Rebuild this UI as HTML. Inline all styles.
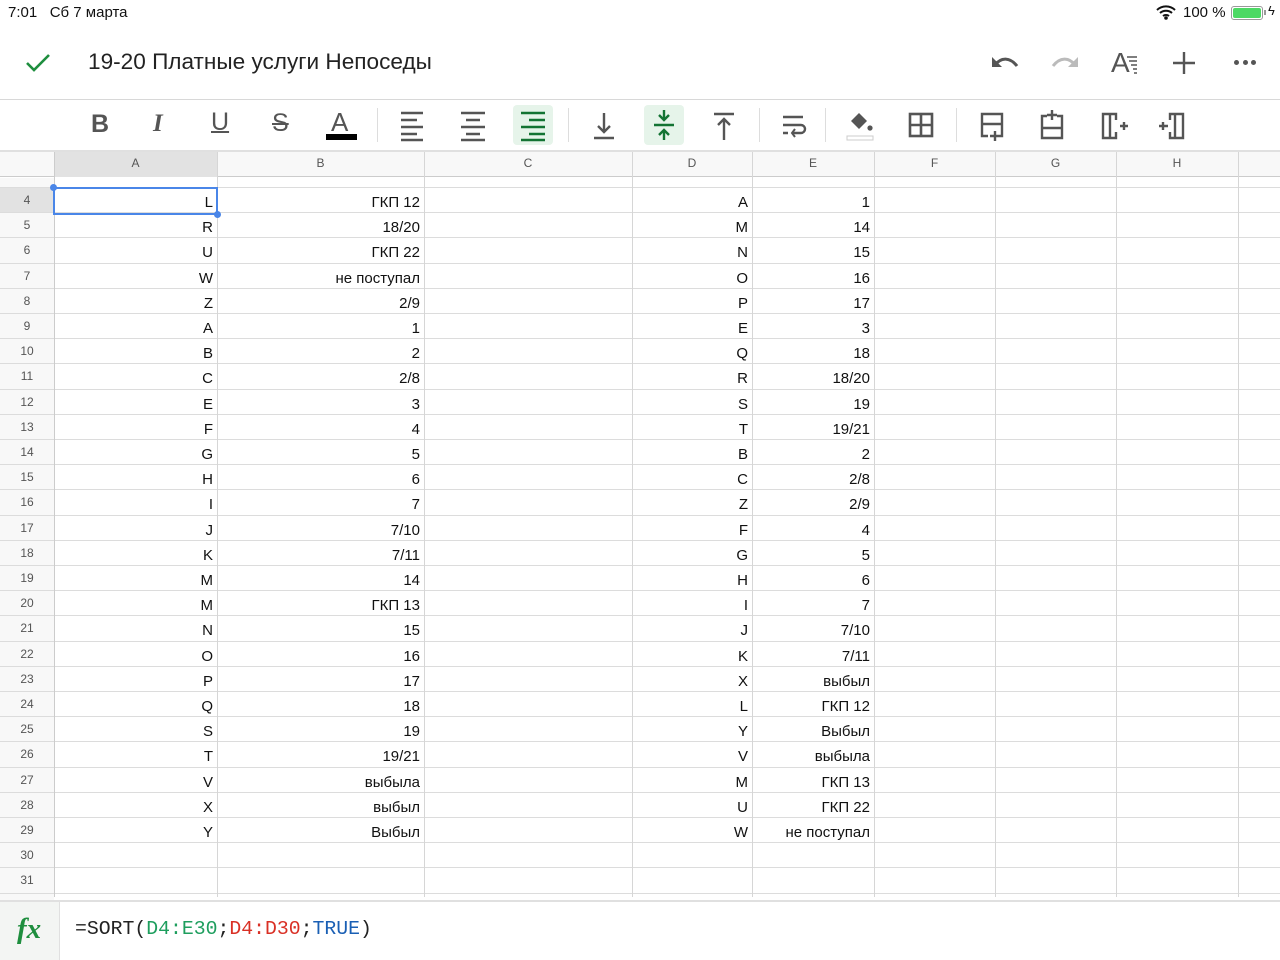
<!DOCTYPE html>
<html><head><meta charset="utf-8"><style>
*{margin:0;padding:0;box-sizing:border-box}
body{width:1280px;height:960px;overflow:hidden;background:#fff;font-family:"Liberation Sans","Noto Sans CJK SC",sans-serif;position:relative;color:#222}
.abs{position:absolute}
.vl{position:absolute;top:152px;width:1px;height:745px;background:#d6d6d6}
.row{position:absolute;left:0;width:1280px;height:25.2px;border-bottom:1px solid #dcdcdc}
.rn{position:absolute;left:0;width:54px;height:100%;background:#f8f8f8;text-align:center;font-size:12px;color:#555;line-height:25px}
.c{position:absolute;top:0;height:100%;text-align:right;font-size:15px;line-height:29px;padding-right:4px;color:#111}
.ch{position:absolute;top:152px;height:25px;text-align:center;font-size:12px;color:#555;line-height:22px}
.ico{position:absolute;top:107px}
.sep{position:absolute;top:108px;width:1px;height:34px;background:#ddd}
</style></head><body>
<div class="abs" style="left:8px;top:4px;font-size:15px;color:#111">7:01&nbsp;&nbsp; Сб 7 марта</div>
<div class="abs" style="left:1183px;top:4px;font-size:15px;color:#111">100 %</div>
<svg class="abs" style="left:1156px;top:5px" width="20" height="15" viewBox="0 0 20 15"><path d="M1 5a13 13 0 0 1 18 0M4 8a9 9 0 0 1 12 0M7 11a5 5 0 0 1 6 0" stroke="#111" stroke-width="2" fill="none"/><circle cx="10" cy="13" r="1.8" fill="#111"/></svg>
<div class="abs" style="left:1231px;top:6px;width:32px;height:14px;border:1px solid #999;border-radius:3px;padding:1px"><div style="background:#4cd964;width:100%;height:100%;border-radius:2px"></div></div>
<div class="abs" style="left:1264px;top:10px;width:2px;height:5px;background:#999"></div>
<div class="abs" style="left:1268px;top:3px;font-size:13px;color:#111">ϟ</div>

<svg class="abs" style="left:25px;top:52px" width="26" height="22" viewBox="0 0 26 22"><path d="M2 11l7 7L24 3" stroke="#1e8e3e" stroke-width="2.6" fill="none"/></svg>
<div class="abs" style="left:88px;top:49px;font-size:22.6px;color:#222">19-20 Платные услуги Непоседы</div>
<svg class="abs" style="left:990px;top:53px" width="30" height="20" viewBox="0 0 30 20"><path d="M5 12c6-8 15-8 22 1" stroke="#555" stroke-width="3" fill="none"/><path d="M2 4v10h10z" fill="#555"/></svg>
<svg class="abs" style="left:1050px;top:53px" width="30" height="20" viewBox="0 0 30 20"><path d="M25 12c-6-8-15-8-22 1" stroke="#bbb" stroke-width="3" fill="none"/><path d="M28 4v10h-10z" fill="#bbb"/></svg>
<div class="abs" style="left:1111px;top:47px;font-size:28px;color:#555">A</div>
<svg class="abs" style="left:1127px;top:56px" width="12" height="18"><path d="M0 1h10M2 5h8M4 9h6M6 13h4M7 17h3" stroke="#555" stroke-width="1.6"/></svg>
<svg class="abs" style="left:1172px;top:51px" width="24" height="24"><path d="M12 1v22M1 12h22" stroke="#555" stroke-width="2.4"/></svg>
<div class="abs" style="left:1234px;top:60px;width:22px;height:6px;display:flex;justify-content:space-between"><i style="width:5px;height:5px;border-radius:50%;background:#555"></i><i style="width:5px;height:5px;border-radius:50%;background:#555"></i><i style="width:5px;height:5px;border-radius:50%;background:#555"></i></div>

<div class="abs" style="left:0;top:99px;width:1280px;height:1px;background:#d8d8d8"></div>
<div class="abs" style="left:513px;top:105px;width:40px;height:40px;background:#e6f4ea;border-radius:4px"></div>
<div class="abs" style="left:644px;top:105px;width:40px;height:40px;background:#e6f4ea;border-radius:4px"></div>
<div class="abs" style="left:91px;top:110px;font-size:25px;font-weight:bold;color:#555">B</div>
<div class="abs" style="left:153px;top:110px;font-size:25px;font-weight:bold;font-style:italic;color:#555;font-family:'Liberation Serif',serif">I</div>
<div class="abs" style="left:211px;top:108px;font-size:25px;color:#555;text-decoration:underline;text-decoration-thickness:2px">U</div>
<div class="abs" style="left:272px;top:109px;font-size:25px;color:#555;text-decoration:line-through;text-decoration-thickness:2px">S</div>
<div class="abs" style="left:331px;top:107px;font-size:26px;color:#555">A</div>
<div class="abs" style="left:326px;top:134px;width:31px;height:6px;background:#000"></div>
<div class="sep" style="left:377px"></div>
<svg class="ico" style="left:400px" width="26" height="36"><path d="M1 6h22M1 13h16M1 20h22M1 27h16M1 33h22" stroke="#555" stroke-width="2.4"/></svg>
<svg class="ico" style="left:460px" width="26" height="36"><path d="M1 6h24M6 13h14M1 20h24M6 27h14M1 33h24" stroke="#555" stroke-width="2.4"/></svg>
<svg class="ico" style="left:520px" width="26" height="36"><path d="M1 6h24M9 13h16M1 20h24M9 27h16M1 33h24" stroke="#137333" stroke-width="2.4"/></svg>
<div class="sep" style="left:568px"></div>
<svg class="ico" style="left:592px" width="24" height="36"><path d="M12 6v19M6 19l6 6 6-6M2 31h20" stroke="#555" stroke-width="2.4" fill="none"/></svg>
<svg class="ico" style="left:652px" width="24" height="36"><path d="M2 18h20M12 3v10M12 23v10" stroke="#137333" stroke-width="2.4"/><path d="M7 8l5 5 5-5M7 28l5-5 5 5" stroke="#137333" stroke-width="2.4" fill="none"/></svg>
<svg class="ico" style="left:712px" width="24" height="36"><path d="M2 7h20M12 12v21M6 18l6-6 6 6" stroke="#555" stroke-width="2.4" fill="none"/></svg>
<div class="sep" style="left:759px"></div>
<svg class="ico" style="left:781px" width="26" height="36"><path d="M2 10h20M2 18h18a4 4 0 0 1 0 8h-8M2 26h5" stroke="#555" stroke-width="2.4" fill="none"/><path d="M14 22l-3 4 3 4" stroke="#555" stroke-width="2" fill="none"/></svg>
<div class="sep" style="left:825px"></div>
<svg class="ico" style="left:846px" width="30" height="36"><path d="M5 14l8-8 8 8-8 8z" fill="#555"/><circle cx="24" cy="21" r="2.6" fill="#555"/><rect x="1" y="29" width="26" height="4" fill="none" stroke="#ccc"/></svg>
<svg class="ico" style="left:908px" width="26" height="36"><rect x="2" y="7" width="22" height="22" fill="none" stroke="#555" stroke-width="2.6"/><path d="M13 7v22M2 18h22" stroke="#555" stroke-width="2.6"/></svg>
<div class="sep" style="left:956px"></div>
<svg class="ico" style="left:979px" width="26" height="36"><path d="M9 29H3V7h20v22h-2M3 17h20M16 24v10M11 29h10" stroke="#555" stroke-width="2.4" fill="none"/></svg>
<svg class="ico" style="left:1039px" width="26" height="36"><path d="M8 9H3v22h20V9h-5M3 21h20M13 3v10M8 8h10" stroke="#555" stroke-width="2.4" fill="none"/></svg>
<svg class="ico" style="left:1100px" width="28" height="36"><path d="M10 7H3v24h7V7zM10 7h6v6M10 31h6v-6M20 19h8M24 15v8" stroke="#555" stroke-width="2.4" fill="none"/></svg>
<svg class="ico" style="left:1158px" width="28" height="36"><path d="M17 7h8v24h-8zM17 7h-5v6M17 31h-5v-6M1 19h9M5 15v8" stroke="#555" stroke-width="2.4" fill="none"/></svg>

<div class="abs" style="left:0;top:150px;width:1280px;height:2px;background:#e0e0e0"></div>
<div class="abs" style="left:0;top:152px;width:1280px;height:25px;background:#f8f8f8;border-bottom:1px solid #ccc"></div>
<div class="abs" style="left:54px;top:152px;width:163px;height:25px;background:#e2e2e2"></div>
<div class="ch" style="left:54px;width:163px">A</div>
<div class="ch" style="left:217px;width:207px">B</div>
<div class="ch" style="left:424px;width:208px">C</div>
<div class="ch" style="left:632px;width:120px">D</div>
<div class="ch" style="left:752px;width:122px">E</div>
<div class="ch" style="left:874px;width:121px">F</div>
<div class="ch" style="left:995px;width:121px">G</div>
<div class="ch" style="left:1116px;width:122px">H</div>
<div class="abs" style="left:0;top:178px;width:54px;height:10px;background:#f8f8f8;border-bottom:1px solid #dcdcdc"></div>
<div class="abs" style="left:54px;top:178px;width:1226px;height:10px;border-bottom:1px solid #dcdcdc"></div>

<div class="row" style="top:188px"><div class="rn" style="background:#e2e2e2">4</div><div class="c" style="left:54px;width:163px">L</div><div class="c" style="left:217px;width:207px">ГКП 12</div><div class="c" style="left:632px;width:120px">A</div><div class="c" style="left:752px;width:122px">1</div></div>
<div class="row" style="top:213.2px"><div class="rn">5</div><div class="c" style="left:54px;width:163px">R</div><div class="c" style="left:217px;width:207px">18/20</div><div class="c" style="left:632px;width:120px">M</div><div class="c" style="left:752px;width:122px">14</div></div>
<div class="row" style="top:238.4px"><div class="rn">6</div><div class="c" style="left:54px;width:163px">U</div><div class="c" style="left:217px;width:207px">ГКП 22</div><div class="c" style="left:632px;width:120px">N</div><div class="c" style="left:752px;width:122px">15</div></div>
<div class="row" style="top:263.6px"><div class="rn">7</div><div class="c" style="left:54px;width:163px">W</div><div class="c" style="left:217px;width:207px">не поступал</div><div class="c" style="left:632px;width:120px">O</div><div class="c" style="left:752px;width:122px">16</div></div>
<div class="row" style="top:288.8px"><div class="rn">8</div><div class="c" style="left:54px;width:163px">Z</div><div class="c" style="left:217px;width:207px">2/9</div><div class="c" style="left:632px;width:120px">P</div><div class="c" style="left:752px;width:122px">17</div></div>
<div class="row" style="top:314px"><div class="rn">9</div><div class="c" style="left:54px;width:163px">A</div><div class="c" style="left:217px;width:207px">1</div><div class="c" style="left:632px;width:120px">E</div><div class="c" style="left:752px;width:122px">3</div></div>
<div class="row" style="top:339.2px"><div class="rn">10</div><div class="c" style="left:54px;width:163px">B</div><div class="c" style="left:217px;width:207px">2</div><div class="c" style="left:632px;width:120px">Q</div><div class="c" style="left:752px;width:122px">18</div></div>
<div class="row" style="top:364.4px"><div class="rn">11</div><div class="c" style="left:54px;width:163px">C</div><div class="c" style="left:217px;width:207px">2/8</div><div class="c" style="left:632px;width:120px">R</div><div class="c" style="left:752px;width:122px">18/20</div></div>
<div class="row" style="top:389.6px"><div class="rn">12</div><div class="c" style="left:54px;width:163px">E</div><div class="c" style="left:217px;width:207px">3</div><div class="c" style="left:632px;width:120px">S</div><div class="c" style="left:752px;width:122px">19</div></div>
<div class="row" style="top:414.8px"><div class="rn">13</div><div class="c" style="left:54px;width:163px">F</div><div class="c" style="left:217px;width:207px">4</div><div class="c" style="left:632px;width:120px">T</div><div class="c" style="left:752px;width:122px">19/21</div></div>
<div class="row" style="top:440px"><div class="rn">14</div><div class="c" style="left:54px;width:163px">G</div><div class="c" style="left:217px;width:207px">5</div><div class="c" style="left:632px;width:120px">B</div><div class="c" style="left:752px;width:122px">2</div></div>
<div class="row" style="top:465.2px"><div class="rn">15</div><div class="c" style="left:54px;width:163px">H</div><div class="c" style="left:217px;width:207px">6</div><div class="c" style="left:632px;width:120px">C</div><div class="c" style="left:752px;width:122px">2/8</div></div>
<div class="row" style="top:490.4px"><div class="rn">16</div><div class="c" style="left:54px;width:163px">I</div><div class="c" style="left:217px;width:207px">7</div><div class="c" style="left:632px;width:120px">Z</div><div class="c" style="left:752px;width:122px">2/9</div></div>
<div class="row" style="top:515.6px"><div class="rn">17</div><div class="c" style="left:54px;width:163px">J</div><div class="c" style="left:217px;width:207px">7/10</div><div class="c" style="left:632px;width:120px">F</div><div class="c" style="left:752px;width:122px">4</div></div>
<div class="row" style="top:540.8px"><div class="rn">18</div><div class="c" style="left:54px;width:163px">K</div><div class="c" style="left:217px;width:207px">7/11</div><div class="c" style="left:632px;width:120px">G</div><div class="c" style="left:752px;width:122px">5</div></div>
<div class="row" style="top:566px"><div class="rn">19</div><div class="c" style="left:54px;width:163px">M</div><div class="c" style="left:217px;width:207px">14</div><div class="c" style="left:632px;width:120px">H</div><div class="c" style="left:752px;width:122px">6</div></div>
<div class="row" style="top:591.2px"><div class="rn">20</div><div class="c" style="left:54px;width:163px">M</div><div class="c" style="left:217px;width:207px">ГКП 13</div><div class="c" style="left:632px;width:120px">I</div><div class="c" style="left:752px;width:122px">7</div></div>
<div class="row" style="top:616.4px"><div class="rn">21</div><div class="c" style="left:54px;width:163px">N</div><div class="c" style="left:217px;width:207px">15</div><div class="c" style="left:632px;width:120px">J</div><div class="c" style="left:752px;width:122px">7/10</div></div>
<div class="row" style="top:641.6px"><div class="rn">22</div><div class="c" style="left:54px;width:163px">O</div><div class="c" style="left:217px;width:207px">16</div><div class="c" style="left:632px;width:120px">K</div><div class="c" style="left:752px;width:122px">7/11</div></div>
<div class="row" style="top:666.8px"><div class="rn">23</div><div class="c" style="left:54px;width:163px">P</div><div class="c" style="left:217px;width:207px">17</div><div class="c" style="left:632px;width:120px">X</div><div class="c" style="left:752px;width:122px">выбыл</div></div>
<div class="row" style="top:692px"><div class="rn">24</div><div class="c" style="left:54px;width:163px">Q</div><div class="c" style="left:217px;width:207px">18</div><div class="c" style="left:632px;width:120px">L</div><div class="c" style="left:752px;width:122px">ГКП 12</div></div>
<div class="row" style="top:717.2px"><div class="rn">25</div><div class="c" style="left:54px;width:163px">S</div><div class="c" style="left:217px;width:207px">19</div><div class="c" style="left:632px;width:120px">Y</div><div class="c" style="left:752px;width:122px">Выбыл</div></div>
<div class="row" style="top:742.4px"><div class="rn">26</div><div class="c" style="left:54px;width:163px">T</div><div class="c" style="left:217px;width:207px">19/21</div><div class="c" style="left:632px;width:120px">V</div><div class="c" style="left:752px;width:122px">выбыла</div></div>
<div class="row" style="top:767.6px"><div class="rn">27</div><div class="c" style="left:54px;width:163px">V</div><div class="c" style="left:217px;width:207px">выбыла</div><div class="c" style="left:632px;width:120px">M</div><div class="c" style="left:752px;width:122px">ГКП 13</div></div>
<div class="row" style="top:792.8px"><div class="rn">28</div><div class="c" style="left:54px;width:163px">X</div><div class="c" style="left:217px;width:207px">выбыл</div><div class="c" style="left:632px;width:120px">U</div><div class="c" style="left:752px;width:122px">ГКП 22</div></div>
<div class="row" style="top:818px"><div class="rn">29</div><div class="c" style="left:54px;width:163px">Y</div><div class="c" style="left:217px;width:207px">Выбыл</div><div class="c" style="left:632px;width:120px">W</div><div class="c" style="left:752px;width:122px">не поступал</div></div>
<div class="row" style="top:843.2px"><div class="rn">30</div></div>
<div class="row" style="top:868.4px"><div class="rn">31</div></div>
<div class="row" style="top:893.6px;height:10px"><div class="rn"></div></div>

<div class="vl" style="left:54px;background:#ccc"></div>
<div class="vl" style="left:217px"></div>
<div class="vl" style="left:424px"></div>
<div class="vl" style="left:632px"></div>
<div class="vl" style="left:752px"></div>
<div class="vl" style="left:874px"></div>
<div class="vl" style="left:995px"></div>
<div class="vl" style="left:1116px"></div>
<div class="vl" style="left:1238px"></div>

<div class="abs" style="left:53px;top:187px;width:165px;height:28px;border:2px solid #4a86e8"></div>
<div class="abs" style="left:50px;top:184px;width:7px;height:7px;border-radius:50%;background:#4a86e8"></div>
<div class="abs" style="left:214px;top:211px;width:7px;height:7px;border-radius:50%;background:#4a86e8"></div>

<div class="abs" style="left:0;top:900px;width:1280px;height:60px;background:#fff;border-top:2px solid #e0e0e0"></div>
<div class="abs" style="left:0;top:902px;width:60px;height:58px;background:#f3f5f3;border-right:1px solid #e0e0e0"></div>
<div class="abs" style="left:17px;top:913px;font-size:29px;font-style:italic;font-weight:bold;color:#1e8e3e;font-family:'Liberation Serif',serif">fx</div>
<div class="abs" style="left:75px;top:918px;font-size:19.8px;font-family:'Liberation Mono',monospace;color:#222">=SORT(<span style="color:#1e9e5e">D4:E30</span>;<span style="color:#d93025">D4:D30</span>;<span style="color:#1a5fb4">TRUE</span>)</div>
</body></html>
